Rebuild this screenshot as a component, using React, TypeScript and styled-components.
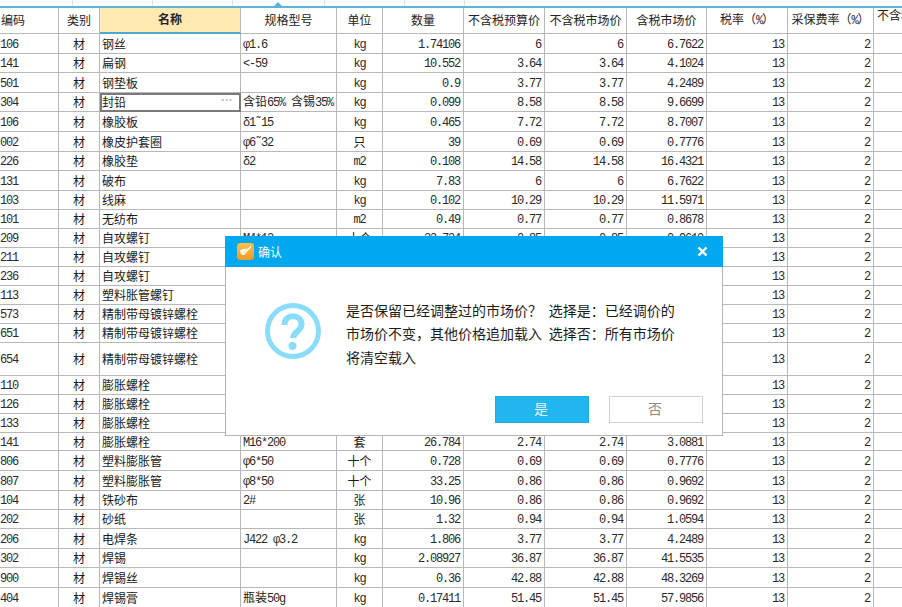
import React from 'react';
import styled, { createGlobalStyle } from 'styled-components';

const GlobalStyle = createGlobalStyle`
    html, body {
        margin: 0;
        padding: 0;
        background: #fff;
    }
    body {
        font-family: "Noto Sans CJK SC", "Liberation Sans", sans-serif;
        font-size: 12px;
        color: #1a1a1a;
    }
`;

const Page = styled.div`
    position: relative;
    width: 902px;
    height: 607px;
    overflow: hidden;
    background: #fff;
`;

const Ruler = styled.div`
    position: relative;
    display: flex;
    height: 6px;
    border-bottom: 2px solid #5ab3d9;
`;

const RulerTick = styled.div<{ $w: number }>`
    width: ${p => p.$w}px;
    flex: none;
    box-sizing: border-box;
    border-right: 1px solid #e2e2e2;
`;

const RulerMark = styled.div`
    position: absolute;
    left: 274px;
    top: 2px;
    width: 0;
    height: 0;
    border-left: 4px solid transparent;
    border-right: 4px solid transparent;
    border-bottom: 4px solid #5ab3d9;
`;

const Sheet = styled.table`
    table-layout: fixed;
    width: 1073px;
    border-collapse: separate;
    border-spacing: 0;
`;

const HeadCell = styled.th<{ $active?: boolean; $last?: boolean; $left?: boolean }>`
    height: 26px;
    padding: ${p => (p.$last ? '1px 0 0 3px' : p.$left ? '0 0 2px 1px' : '0 0 2px')};
    box-sizing: border-box;
    overflow: hidden;
    white-space: nowrap;
    vertical-align: ${p => (p.$last ? 'top' : 'middle')};
    text-align: ${p => (p.$last || p.$left ? 'left' : 'center')};
    font-size: 12px;
    line-height: 12px;
    font-weight: ${p => (p.$active ? 700 : 400)};
    color: #222;
    background: ${p => (p.$active ? '#ffeab3' : '#fff')};
    border-right: 1px solid #b8b8b8;
    border-bottom: ${p => (p.$active ? '2px solid #4aa9d3' : '1px solid #b8b8b8')};
`;

const Row = styled.tr<{ $h: number }>`
    height: ${p => p.$h}px;
`;

const Cell = styled.td<{ $align?: 'left' | 'center' | 'right'; $selected?: boolean }>`
    position: relative;
    padding: ${p => (p.$align === 'right' ? '0 3px 0 0' : p.$align === 'center' ? '0' : '0 0 0 2px')};
    box-sizing: border-box;
    overflow: hidden;
    white-space: nowrap;
    font-size: 12px;
    line-height: 14px;
    text-align: ${p => p.$align || 'left'};
    border-right: 1px solid #b8b8b8;
    border-bottom: 1px solid #b8b8b8;
    ${p => p.$selected && 'outline: 2px solid #7a7a7a; outline-offset: -2px;'}
`;

const CodeCell = styled(Cell)`
    padding-left: 0;
`;

const Latin = styled.span`
    font-family: "Liberation Mono", monospace;
    font-size: 12px;
    letter-spacing: -1.2px;
    color: #2a2a2a;
`;

const MoreDots = styled.span`
    position: absolute;
    right: 7px;
    top: 1px;
    font-family: "Liberation Sans", sans-serif;
    font-size: 10px;
    font-weight: 700;
    letter-spacing: 0.6px;
    color: #7fa9c9;
`;

const Dialog = styled.div`
    position: absolute;
    left: 225px;
    top: 236px;
    width: 498px;
    height: 200px;
    display: flex;
    flex-direction: column;
`;

const TitleBar = styled.div`
    height: 31px;
    flex: none;
    display: flex;
    align-items: center;
    padding: 0 15px 0 12px;
    gap: 4px;
    background: #00a8ef;
    color: #fff;
    font-size: 12px;
`;

const TitleText = styled.span`
    flex: 1;
`;

const DialogBody = styled.div`
    flex: 1;
    display: flex;
    flex-direction: column;
    background: #fff;
    border: 1px solid #b4b4b4;
    border-top: 0;
`;

const Message = styled.div`
    display: flex;
    gap: 25px;
    padding: 32px 0 0 39px;
`;

const QuestionIcon = styled.svg`
    margin-top: 4px;
    flex: none;
`;

const MessageLine = styled.div`
    font-size: 14px;
    line-height: 23.3px;
    word-spacing: 3.5px;
    white-space: pre;
    color: #1c1c1c;
`;

const Actions = styled.div`
    margin-top: auto;
    display: flex;
    justify-content: flex-end;
    gap: 20px;
    padding: 0 19px 12px 0;
`;

const DialogButton = styled.button<{ $primary?: boolean }>`
    width: 94px;
    height: 27px;
    box-sizing: border-box;
    padding: 0 2px 3px 0;
    font-family: inherit;
    font-size: 14px;
    color: ${p => (p.$primary ? '#dff4fd' : '#8a8a8a')};
    background: ${p => (p.$primary ? '#22b6ee' : '#fff')};
    border: 1px solid ${p => (p.$primary ? '#24a9dc' : '#cfcfcf')};
`;

type Item = {
    code: string;
    name: string;
    spec?: string;
    unit?: string;
    qty?: string;
    pre?: string;
    mkt?: string;
    tax?: string;
    h?: number;
    selected?: boolean;
};

const columns = [59, 41, 141, 96, 46, 81, 81, 82, 80, 81, 86, 199];
const rulerTicks = [73, 80, 80, 92, 80, 60];

// rows in the middle are covered by the dialog, so only the visible parts have values
const items: Item[] = [
    { code: '106', name: '钢丝', spec: 'φ1.6', unit: 'kg', qty: '1.74106', pre: '6', mkt: '6', tax: '6.7622', h: 20 },
    { code: '141', name: '扁钢', spec: '<-59', unit: 'kg', qty: '10.552', pre: '3.64', mkt: '3.64', tax: '4.1024' },
    { code: '501', name: '钢垫板', unit: 'kg', qty: '0.9', pre: '3.77', mkt: '3.77', tax: '4.2489', h: 20 },
    { code: '304', name: '封铅', spec: '含铅65% 含锡35%', unit: 'kg', qty: '0.099', pre: '8.58', mkt: '8.58', tax: '9.6699', selected: true },
    { code: '106', name: '橡胶板', spec: 'δ1˜15', unit: 'kg', qty: '0.465', pre: '7.72', mkt: '7.72', tax: '8.7007', h: 20 },
    { code: '002', name: '橡皮护套圈', spec: 'φ6˜32', unit: '只', qty: '39', pre: '0.69', mkt: '0.69', tax: '0.7776', h: 20 },
    { code: '226', name: '橡胶垫', spec: 'δ2', unit: 'm2', qty: '0.108', pre: '14.58', mkt: '14.58', tax: '16.4321' },
    { code: '131', name: '破布', unit: 'kg', qty: '7.83', pre: '6', mkt: '6', tax: '6.7622', h: 20 },
    { code: '103', name: '线麻', unit: 'kg', qty: '0.102', pre: '10.29', mkt: '10.29', tax: '11.5971' },
    { code: '101', name: '无纺布', unit: 'm2', qty: '0.49', pre: '0.77', mkt: '0.77', tax: '0.8678' },
    { code: '209', name: '自攻螺钉', spec: 'M4*12', unit: '十个', qty: '23.724', pre: '0.85', mkt: '0.85', tax: '0.9610' },
    { code: '211', name: '自攻螺钉' },
    { code: '236', name: '自攻螺钉' },
    { code: '113', name: '塑料胀管螺钉' },
    { code: '573', name: '精制带母镀锌螺栓' },
    { code: '651', name: '精制带母镀锌螺栓' },
    { code: '654', name: '精制带母镀锌螺栓', h: 33 },
    { code: '110', name: '膨胀螺栓' },
    { code: '126', name: '膨胀螺栓' },
    { code: '133', name: '膨胀螺栓' },
    { code: '141', name: '膨胀螺栓', spec: 'M16*200', unit: '套', qty: '26.784', pre: '2.74', mkt: '2.74', tax: '3.0881', h: 18 },
    { code: '806', name: '塑料膨胀管', spec: 'φ6*50', unit: '十个', qty: '0.728', pre: '0.69', mkt: '0.69', tax: '0.7776', h: 20 },
    { code: '807', name: '塑料膨胀管', spec: 'φ8*50', unit: '十个', qty: '33.25', pre: '0.86', mkt: '0.86', tax: '0.9692', h: 20 },
    { code: '104', name: '铁砂布', spec: '2#', unit: '张', qty: '10.96', pre: '0.86', mkt: '0.86', tax: '0.9692' },
    { code: '202', name: '砂纸', unit: '张', qty: '1.32', pre: '0.94', mkt: '0.94', tax: '1.0594' },
    { code: '206', name: '电焊条', spec: 'J422 φ3.2', unit: 'kg', qty: '1.806', pre: '3.77', mkt: '3.77', tax: '4.2489', h: 20 },
    { code: '302', name: '焊锡', unit: 'kg', qty: '2.08927', pre: '36.87', mkt: '36.87', tax: '41.5535' },
    { code: '900', name: '焊锡丝', unit: 'kg', qty: '0.36', pre: '42.88', mkt: '42.88', tax: '48.3269', h: 20 },
    { code: '404', name: '焊锡膏', spec: '瓶装50g', unit: 'kg', qty: '0.17411', pre: '51.45', mkt: '51.45', tax: '57.9856', h: 20 },
];

// CJK stays in the sheet font, latin parts get the narrow half-width look
function Mixed({ text = '' }: { text?: string }) {
    const parts = text.split(/([\x20-\x7eφδ˜]+)/).filter(Boolean);
    return (
        <>
            {parts.map((part, i) =>
                /[\x20-\x7eφδ˜]/.test(part) ? <Latin key={i}>{part}</Latin> : <span key={i}>{part}</span>
            )}
        </>
    );
}

function AppLogo() {
    return (
        <svg width="17" height="17" viewBox="0 0 17 17">
            <defs>
                <linearGradient id="logoFill" x1="0" y1="0" x2="0" y2="1">
                    <stop offset="0" stopColor="#fbc24a" />
                    <stop offset="1" stopColor="#ee9a2b" />
                </linearGradient>
            </defs>
            <rect width="17" height="17" rx="3.5" fill="url(#logoFill)" />
            <path d="M3 7.5 C5 6 9 5.5 11 6 L8.5 11 C7 12.5 4.5 12 3.8 10.5 Z" fill="#fff" />
            <path d="M7 9.2 L13.6 2.6 L15 4 L8.6 10.6 Z" fill="#fff" stroke="#ee9a2b" strokeWidth="0.5" />
        </svg>
    );
}

function App() {
    return (
        <Page>
            <GlobalStyle />
            <Ruler>
                {rulerTicks.map((w, i) => (
                    <RulerTick key={i} $w={w} />
                ))}
                <RulerMark />
            </Ruler>
            <Sheet>
                <colgroup>
                    {columns.map((w, i) => (
                        <col key={i} style={{ width: w }} />
                    ))}
                </colgroup>
                <thead>
                    <tr>
                        <HeadCell $left>编码</HeadCell>
                        <HeadCell>类别</HeadCell>
                        <HeadCell $active>名称</HeadCell>
                        <HeadCell>规格型号</HeadCell>
                        <HeadCell>单位</HeadCell>
                        <HeadCell>数量</HeadCell>
                        <HeadCell>不含税预算价</HeadCell>
                        <HeadCell>不含税市场价</HeadCell>
                        <HeadCell>含税市场价</HeadCell>
                        <HeadCell>税率（<Latin>%</Latin>）</HeadCell>
                        <HeadCell>采保费率（<Latin>%</Latin>）</HeadCell>
                        <HeadCell $last>不含税</HeadCell>
                    </tr>
                </thead>
                <tbody>
                    {items.map((item, i) => (
                        <Row key={i} $h={item.h || 19}>
                            <CodeCell><Latin>{item.code}</Latin></CodeCell>
                            <Cell $align="center">材</Cell>
                            <Cell $selected={item.selected}>
                                {item.name}
                                {item.selected && <MoreDots>···</MoreDots>}
                            </Cell>
                            <Cell><Mixed text={item.spec} /></Cell>
                            <Cell $align="center"><Mixed text={item.unit} /></Cell>
                            <Cell $align="right"><Latin>{item.qty}</Latin></Cell>
                            <Cell $align="right"><Latin>{item.pre}</Latin></Cell>
                            <Cell $align="right"><Latin>{item.mkt}</Latin></Cell>
                            <Cell $align="right"><Latin>{item.tax}</Latin></Cell>
                            <Cell $align="right"><Latin>13</Latin></Cell>
                            <Cell $align="right"><Latin>2</Latin></Cell>
                            <Cell />
                        </Row>
                    ))}
                </tbody>
            </Sheet>

            <Dialog>
                <TitleBar>
                    <AppLogo />
                    <TitleText>确认</TitleText>
                    <svg width="11" height="11" viewBox="0 0 11 11">
                        <path d="M1.5 1.5 L9.5 9.5 M9.5 1.5 L1.5 9.5" stroke="#fff" strokeWidth="2.4" />
                    </svg>
                </TitleBar>
                <DialogBody>
                    <Message>
                        <QuestionIcon width="56" height="56" viewBox="0 0 56 56">
                            <circle cx="28" cy="28" r="25.5" fill="none" stroke="#8adcfb" strokeWidth="5" />
                            <path
                                d="M19.5 22 C19.5 10 36.5 10.5 36.5 21.5 C36.5 28 28.5 28.5 28 35"
                                fill="none"
                                stroke="#8adcfb"
                                strokeWidth="6"
                            />
                            <circle cx="27.5" cy="43" r="4" fill="#8adcfb" />
                        </QuestionIcon>
                        <div>
                            <MessageLine>是否保留已经调整过的市场价？ 选择是：已经调价的</MessageLine>
                            <MessageLine>市场价不变，其他价格追加载入 选择否：所有市场价</MessageLine>
                            <MessageLine>将清空载入</MessageLine>
                        </div>
                    </Message>
                    <Actions>
                        <DialogButton $primary>是</DialogButton>
                        <DialogButton>否</DialogButton>
                    </Actions>
                </DialogBody>
            </Dialog>
        </Page>
    );
}

export default App;
